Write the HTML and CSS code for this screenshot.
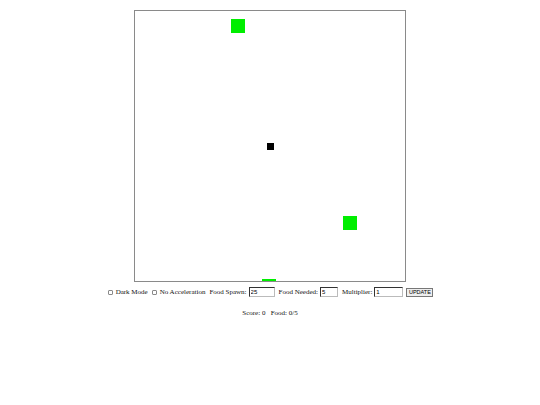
FILE: index.html
```html
<!DOCTYPE html>
<html>
<head>
<meta charset="utf-8">
<link rel="stylesheet" href="styles.css">
</head>
<body>
<div class="page">
  <div class="board">
    <div class="food food-a"></div>
    <div class="food food-b"></div>
    <div class="food food-c"></div>
    <div class="snake"></div>
  </div>
  <div class="controls">
    <label class="opt"><input type="checkbox" class="cb"><span>Dark Mode</span></label>
    <label class="opt"><input type="checkbox" class="cb"><span>No Acceleration</span></label>
    <label class="opt"><span>Food Spawn:</span><input type="text" class="field w-spawn" value="25"></label>
    <label class="opt"><span>Food Needed:</span><input type="text" class="field w-need" value="5"></label>
    <label class="opt"><span>Multiplier:</span><input type="text" class="field w-mult" value="1"><button class="btn">UPDATE</button></label>
  </div>
  <div class="score">Score: 0&nbsp;&nbsp; Food: 0/5</div>
</div>
</body>
</html>
```

FILE: styles.css
```css
html, body {
  margin: 0;
  padding: 0;
  background: #fff;
}
.page {
  font-family: "Liberation Serif", serif;
  font-size: 7px;
  color: #111;
  padding-top: 10px;
  display: flex;
  flex-direction: column;
  align-items: center;
}
.board {
  position: relative;
  width: 270px;
  height: 270px;
  border: 1px solid #8a8a8a;
  background: #fff;
  overflow: hidden;
}
.food {
  position: absolute;
  width: 14px;
  height: 14px;
  background: #00ee00;
}
.food-a { left: 96px; top: 8px; }
.food-b { left: 208px; top: 205px; }
.food-c { left: 127px; top: 268px; }
.snake {
  position: absolute;
  left: 132px;
  top: 132px;
  width: 7px;
  height: 7px;
  background: #000;
}
.controls {
  display: flex;
  align-items: center;
  gap: 4px;
  margin-top: 4px;
  height: 12px;
  padding-left: 1px;
}
.opt {
  display: flex;
  align-items: center;
  gap: 2px;
  white-space: nowrap;
}
.cb {
  width: 5px;
  height: 5px;
  box-sizing: border-box;
  margin: 0 1px 0 0;
  appearance: none;
  border: 1px solid #8a8a8a;
  border-radius: 1px;
  background: #fff;
}
.field {
  font-family: "Liberation Sans", sans-serif;
  font-size: 6px;
  height: 10px;
  box-sizing: border-box;
  padding: 0 1px;
  margin: 0;
  border: 1px solid #333;
  border-right-color: #bbb;
  border-bottom-color: #bbb;
  background: #fff;
  color: #000;
}
.w-spawn { width: 26px; }
.w-need { width: 18px; }
.w-mult { width: 29px; }
.btn {
  font-family: "Liberation Sans", sans-serif;
  font-size: 5.5px;
  height: 9px;
  width: 27px;
  box-sizing: border-box;
  margin: 0 0 0 1px;
  padding: 0;
  border: 1px solid #777;
  background: #eee;
  color: #000;
  line-height: 7px;
}
.score {
  margin-top: 11px;
  text-align: center;
}
```
